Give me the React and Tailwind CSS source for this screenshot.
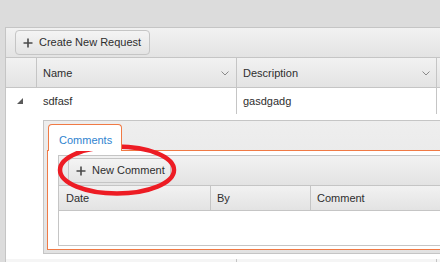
import React from 'react';

function Plus() {
  return (
    <svg width="10" height="10" viewBox="0 0 10 10" className="shrink-0">
      <path d="M5 0.5v9M0.5 5h9" stroke="#4a4a4a" strokeWidth="1.6" fill="none" />
    </svg>
  );
}

function Chevron() {
  return (
    <svg width="8" height="5" viewBox="0 0 8 5" className="shrink-0">
      <path d="M0.5 0.5L4 4L7.5 0.5" stroke="#8a8a8a" strokeWidth="1" fill="none" />
    </svg>
  );
}

function ToolButton({ label, width }) {
  return (
    <button
      className={`flex h-[25px] items-center gap-[6px] rounded-[4px] border border-[#c5c5c5] bg-gradient-to-b from-[#f4f4f4] to-[#e4e4e4] pl-[7px] text-[#2e2e2e] ${width}`}
    >
      <Plus />
      <span>{label}</span>
    </button>
  );
}

export default function App() {
  return (
    <div
      className="relative h-[262px] w-[440px] overflow-hidden bg-[#dcdcdc] pl-[5px] pt-[27px] text-[11px] text-[#2e2e2e]"
      style={{ fontFamily: '"Liberation Sans", Arial, sans-serif' }}
    >
      <div className="w-[520px] border-l border-t border-[#c5c5c5] bg-white">
        {/* toolbar */}
        <div className="flex h-[30px] items-start border-b border-[#c5c5c5] bg-gradient-to-b from-[#f2f2f2] to-[#e3e3e3] pl-[9px] pt-[2px]">
          <ToolButton label="Create New Request" width="w-[135px]" />
        </div>

        {/* header */}
        <div className="flex h-[30px] border-b border-[#c5c5c5] bg-gradient-to-b from-[#f2f2f2] to-[#e3e3e3]">
          <div className="w-[31px] border-r border-[#c5c5c5]" />
          <div className="flex w-[200px] items-center justify-between border-r border-[#c5c5c5] pl-[6px] pr-[7px] pt-[1px]">
            <span>Name</span>
            <Chevron />
          </div>
          <div className="flex w-[200px] items-center justify-between border-r border-[#c5c5c5] pl-[6px] pr-[6px] pt-[1px]">
            <span>Description</span>
            <Chevron />
          </div>
          <div className="flex-1" />
        </div>

        {/* data row */}
        <div className="flex h-[26px]">
          <div className="flex w-[31px] items-center pl-[11px]">
            <svg width="6" height="6" viewBox="0 0 6 6">
              <path d="M6 0V6H0Z" fill="#5a5a5a" />
            </svg>
          </div>
          <div className="flex w-[200px] items-center border-r border-[#c5c5c5] pl-[6px]">sdfasf</div>
          <div className="flex w-[200px] items-center border-r border-[#c5c5c5] pl-[6px]">gasdgadg</div>
          <div className="flex-1" />
        </div>

        {/* detail row */}
        <div className="pb-[5px] pl-[37px] pt-[6px]">
          <div className="border border-[#c5c5c5] bg-gradient-to-b from-[#eeeeee] to-[#e2e2e2] p-[3px]">
            <div className="flex">
              <div className="relative z-10 -mb-px ml-px flex h-[27px] w-[74px] items-start rounded-t-[4px] border border-b-0 border-[#f07a45] bg-white pl-[10px] pt-[7px] text-[#2f83cf]">
                Comments
              </div>
            </div>
            <div className="border border-[#f07a45] bg-white pb-[3px] pl-[10px] pt-[4px]">
              <div className="border border-[#c5c5c5]">
                <div className="flex h-[30px] items-start border-b border-[#c5c5c5] bg-gradient-to-b from-[#f2f2f2] to-[#e3e3e3] pl-[9px] pt-[2px]">
                  <ToolButton label="New Comment" width="w-[103px]" />
                </div>
                <div className="flex h-[25px] border-b border-[#c5c5c5] bg-gradient-to-b from-[#f2f2f2] to-[#e3e3e3]">
                  <div className="flex w-[152px] items-center border-r border-[#c5c5c5] pl-[7px]">Date</div>
                  <div className="flex w-[100px] items-center border-r border-[#c5c5c5] pl-[6px]">By</div>
                  <div className="flex flex-1 items-center pl-[6px]">Comment</div>
                </div>
                <div className="h-[34px] bg-white" />
              </div>
            </div>
          </div>
        </div>

        {/* next row */}
        <div className="flex h-[20px] bg-[#f5f5f5]">
          <div className="w-[31px]" />
          <div className="w-[200px] border-r border-[#c5c5c5]" />
          <div className="w-[200px] border-r border-[#c5c5c5]" />
        </div>
      </div>

      <svg
        className="pointer-events-none absolute left-[56px] top-[144px]"
        width="122"
        height="52"
        viewBox="0 0 122 52"
      >
        <ellipse cx="61" cy="26" rx="57" ry="23.5" stroke="#ed1c24" strokeWidth="4.5" fill="none" />
      </svg>
    </div>
  );
}
